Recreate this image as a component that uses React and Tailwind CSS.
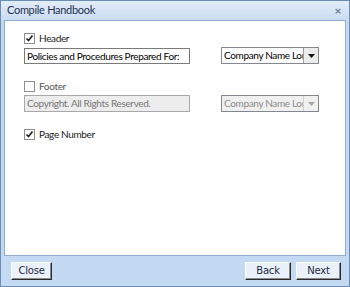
import React from "react";

const Check = ({ checked, disabled }) => (
  <span
    className={`w-[11px] h-[11px] border flex items-center justify-center shrink-0 ${
      disabled ? "border-[#b5b5b5] bg-[#f4f4f4]" : "border-[#8e8f8f] bg-white"
    }`}
  >
    {checked && (
      <svg width="9" height="9" viewBox="0 0 9 9">
        <path d="M1.5 4.5 L3.5 6.5 L7.5 1.5" fill="none" stroke="#222" strokeWidth="1.6" />
      </svg>
    )}
  </span>
);

const Combo = ({ disabled }) => (
  <div
    className={`w-[98px] h-[17px] flex items-stretch border border-[#828790] ${
      disabled ? "bg-[#f0f0f0] text-[#8d8d8d]" : "bg-white text-black"
    }`}
  >
    <div className="flex-1 overflow-hidden whitespace-nowrap pl-[2px] leading-[15px]">Company Name Long</div>
    <div
      className={`w-[15px] flex items-center justify-center border-l ${
        disabled ? "border-[#d0d0d0] bg-[#f0f0f0]" : "border-[#a0a0a0] bg-[#ececec]"
      }`}
    >
      <svg width="7" height="4" viewBox="0 0 7 4">
        <path d="M0 0 H7 L3.5 4 Z" fill={disabled ? "#a8a8a8" : "#111"} />
      </svg>
    </div>
  </div>
);

const Btn = ({ children, className = "" }) => (
  <button
    className={`h-[18px] bg-[#eaf1fb] border border-t-white border-l-white border-r-[#2a2a2a] border-b-[#2a2a2a] shadow-[inset_-1px_-1px_0_#8a8a8a] text-[10px] tracking-[-0.2px] text-[#1b2a3d] leading-none ${className}`}
    style={{ fontFamily: "Tahoma, 'DejaVu Sans', sans-serif" }}
  >
    {children}
  </button>
);

export default function App() {
  return (
    <div
      className="w-[350px] h-[287px] bg-[#c4daf3] border border-[#6d8db9] flex flex-col text-[10px] tracking-[-0.35px] relative overflow-hidden"
      style={{ fontFamily: "Lato, 'Noto Sans', sans-serif" }}
    >
      {/* Title bar */}
      <div className="h-[19px] flex items-center justify-between px-[6px] bg-gradient-to-b from-[#e3edf9] to-[#cadcf2] shrink-0">
        <span className="text-[11px] tracking-[-0.3px] text-[#1e3150]">Compile Handbook</span>
        <span className="text-[#6e7e94] text-[12px] font-bold leading-none mr-[2px]">×</span>
      </div>

      {/* Content */}
      <div className="mx-[3px] h-[236px] bg-white border border-[#8eabd2] shrink-0 pl-[19px] pt-[11px] text-[#1a1a1a]">
        <div className="flex items-center gap-[3px] h-[12px]">
          <Check checked />
          <span className="ml-[1px]">Header</span>
        </div>
        <div className="flex items-center mt-[4px]">
          <div className="w-[166px] h-[16px] border border-[#7a7a7a] bg-white pl-[2px] leading-[14px] text-black whitespace-nowrap overflow-hidden">
            Policies and Procedures Prepared For:
          </div>
          <div className="ml-[31px] -mt-[1px]">
            <Combo />
          </div>
        </div>

        <div className="flex items-center gap-[3px] h-[12px] mt-[16px] text-[#555]">
          <Check />
          <span className="ml-[1px]">Footer</span>
        </div>
        <div className="flex items-center mt-[3px]">
          <div className="w-[166px] h-[17px] border border-[#a8a8a8] bg-[#ededed] pl-[2px] leading-[15px] text-[#777] whitespace-nowrap overflow-hidden">
            Copyright. All Rights Reserved.
          </div>
          <div className="ml-[31px]">
            <Combo disabled />
          </div>
        </div>

        <div className="flex items-center gap-[3px] h-[12px] mt-[16px]">
          <Check checked />
          <span className="ml-[1px]">Page Number</span>
        </div>
      </div>

      {/* Bottom bar */}
      <div className="flex-1 flex items-center justify-between pl-[10px] pr-[8px] pb-[1px]">
        <Btn className="w-[41px]">Close</Btn>
        <div className="flex gap-[5px]">
          <Btn className="w-[46px]">Back</Btn>
          <Btn className="w-[45px]">Next</Btn>
        </div>
      </div>
    </div>
  );
}
